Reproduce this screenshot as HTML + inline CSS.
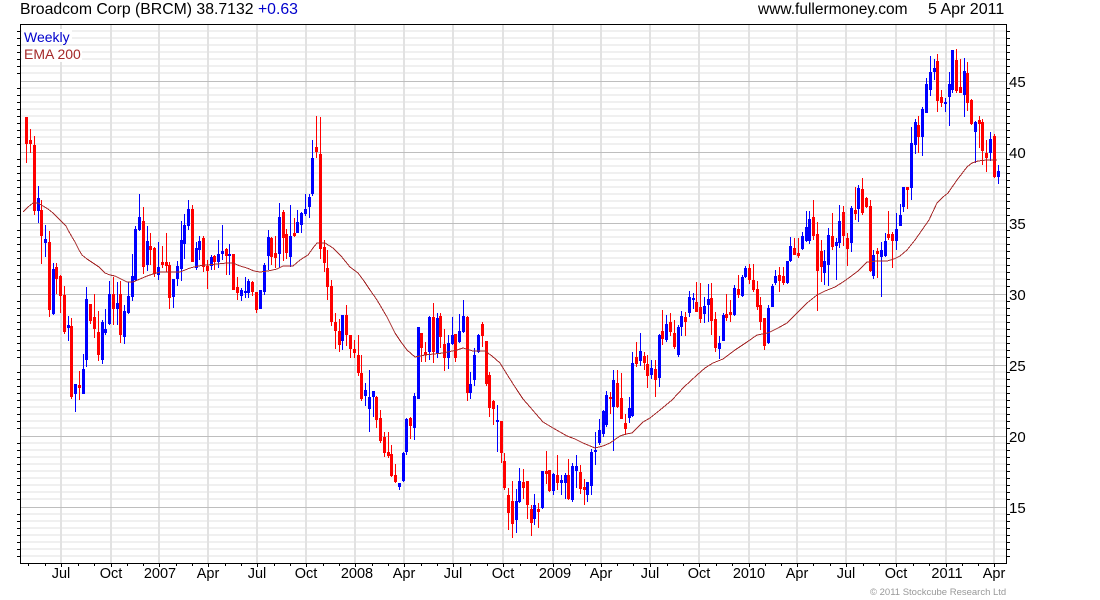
<!DOCTYPE html>
<html><head><meta charset="utf-8"><title>Broadcom Corp</title>
<style>
html,body{margin:0;padding:0;background:#fff;width:1100px;height:600px;overflow:hidden}
svg{display:block}
text{font-family:"Liberation Sans",Arial,sans-serif;fill:#000}
.t{font-size:15.8px}.w{font-size:15.5px}.d{font-size:16px}.y{font-size:15px}.x{font-size:14.5px;text-anchor:middle}.l{font-size:14px}
</style></head><body>
<svg width="1100" height="600" viewBox="0 0 1100 600" xmlns="http://www.w3.org/2000/svg">
<defs>
<path id="m" d="M0 31.5h1M0 38.5h1M0 45.5h1M0 52.5h1M0 59.5h1M0 66.5h1M0 73.5h1M0 88.5h1M0 95.5h1M0 102.5h1M0 109.5h1M0 116.5h1M0 123.5h1M0 130.5h1M0 137.5h1M0 144.5h1M0 159.5h1M0 166.5h1M0 173.5h1M0 180.5h1M0 187.5h1M0 194.5h1M0 201.5h1M0 208.5h1M0 215.5h1M0 230.5h1M0 237.5h1M0 244.5h1M0 251.5h1M0 258.5h1M0 265.5h1M0 272.5h1M0 279.5h1M0 286.5h1M0 301.5h1M0 308.5h1M0 315.5h1M0 322.5h1M0 329.5h1M0 336.5h1M0 343.5h1M0 350.5h1M0 357.5h1M0 372.5h1M0 379.5h1M0 386.5h1M0 393.5h1M0 400.5h1M0 407.5h1M0 414.5h1M0 421.5h1M0 428.5h1M0 443.5h1M0 450.5h1M0 457.5h1M0 464.5h1M0 471.5h1M0 478.5h1M0 485.5h1M0 492.5h1M0 499.5h1M0 514.5h1M0 521.5h1M0 528.5h1M0 535.5h1M0 542.5h1M0 549.5h1M0 556.5h1"/>
</defs>
<g shape-rendering="crispEdges" fill="none">
<use href="#m" transform="matrix(985 0 0 1 21 -.5)" stroke="#f0f0f0" stroke-width="2"/>
<path stroke="#e2e2e2" stroke-width="2" transform="translate(-.5 0)" d="M61.5 25V563M111.5 25V563M159.5 25V563M208.5 25V563M257.5 25V563M306.5 25V563M355.5 25V563M404.5 25V563M453.5 25V563M503.5 25V563M553.5 25V563M601.5 25V563M650.5 25V563M699.5 25V563M749.5 25V563M797.5 25V563M846.5 25V563M896.5 25V563M946.5 25V563M994.5 25V563"/>
<path stroke="#bebebe" d="M21 81.5H1006M21 152.5H1006M21 223.5H1006M21 294.5H1006M21 365.5H1006M21 436.5H1006M21 507.5H1006"/>
<use href="#m" transform="matrix(3 0 0 1 17 0)" stroke="#000"/>
<use href="#m" transform="matrix(3 0 0 1 1007 0)" stroke="#000"/>
<path stroke="#000" d="M20.5 24.5H1006.5V563.5H20.5Z"/>
<path stroke="#000" d="M61.5 564v3M111.5 564v3M159.5 564v3M208.5 564v3M257.5 564v3M306.5 564v3M355.5 564v3M404.5 564v3M453.5 564v3M503.5 564v3M553.5 564v3M601.5 564v3M650.5 564v3M699.5 564v3M749.5 564v3M797.5 564v3M846.5 564v3M896.5 564v3M946.5 564v3M994.5 564v3M28.5 564v2M45.5 564v2M78.5 564v2M94.5 564v2M127.5 564v2M143.5 564v2M176.5 564v2M192.5 564v2M225.5 564v2M241.5 564v2M274.5 564v2M290.5 564v2M323.5 564v2M339.5 564v2M372.5 564v2M388.5 564v2M421.5 564v2M437.5 564v2M470.5 564v2M487.5 564v2M520.5 564v2M536.5 564v2M570.5 564v2M585.5 564v2M617.5 564v2M633.5 564v2M667.5 564v2M683.5 564v2M716.5 564v2M732.5 564v2M765.5 564v2M781.5 564v2M813.5 564v2M830.5 564v2M863.5 564v2M879.5 564v2M913.5 564v2M929.5 564v2M962.5 564v2M978.5 564v2"/>
<rect x="22" y="29" width="50" height="15" fill="#fff"/>
<rect x="22" y="46" width="60" height="16" fill="#fff"/>
<path stroke="#ff0000" d="M26.5 117V163M30.5 129V153M34.5 136V215M41.5 200V264M49.5 231V317M56.5 263V294M60.5 275V313M64.5 286V334M71.5 318V399M79.5 371V400M90.5 304V324M94.5 294V338M98.5 311V361M113.5 277V325M120.5 281V343M143.5 207V274M150.5 233V265M154.5 247V277M162.5 246V268M166.5 233V272M169.5 262V309M192.5 205V262M203.5 236V272M207.5 260V289M214.5 255V270M226.5 248V275M233.5 254V290M237.5 277V300M252.5 281V296M256.5 292V313M271.5 237V265M275.5 236V268M283.5 210V261M286.5 229V259M294.5 218V237M316.5 116V158M320.5 117V259M324.5 240V272M327.5 250V300M331.5 280V326M335.5 313V349M339.5 319V352M346.5 305V346M350.5 335V358M354.5 340V358M358.5 335V376M361.5 355V401M376.5 396V428M380.5 410V443M384.5 432V457M388.5 432V458M391.5 445V477M395.5 464V483M410.5 417V439M421.5 333V362M425.5 342V362M433.5 303V363M440.5 313V348M444.5 329V371M455.5 334V362M467.5 316V401M482.5 322V347M486.5 341V386M489.5 372V417M493.5 400V425M501.5 421V463M504.5 453V490M508.5 488V530M512.5 481V538M523.5 469V499M527.5 481V519M531.5 505V536M538.5 503V528M546.5 451V484M549.5 470V492M557.5 455V490M568.5 459V500M580.5 465V494M584.5 479V505M610.5 392V414M617.5 370V408M621.5 373V419M625.5 414V435M636.5 342V367M644.5 352V370M647.5 355V388M655.5 360V397M662.5 310V345M670.5 313V336M674.5 320V349M685.5 312V336M696.5 282V312M700.5 283V323M711.5 283V335M715.5 312V352M726.5 294V321M730.5 300V322M738.5 275V298M749.5 264V284M753.5 264V292M757.5 281V310M760.5 297V330M764.5 318V350M779.5 267V292M783.5 267V285M794.5 238V255M798.5 238V258M813.5 200V240M817.5 222V311M821.5 240V282M832.5 213V250M843.5 206V246M847.5 233V266M855.5 187V220M862.5 178V215M866.5 197V208M870.5 200V272M877.5 248V278M888.5 211V240M892.5 232V268M907.5 187V209M918.5 116V153M937.5 54V112M941.5 90V107M956.5 49V93M960.5 59V93M967.5 62V111M971.5 99V125M979.5 116V148M982.5 119V165M986.5 140V172M994.5 134V178"/>
<path stroke="#ff0000" stroke-width="3" d="M26.5 117V144M30.5 140V144M34.5 145V211M41.5 210V236M49.5 242V310M56.5 267V279M60.5 276V296M64.5 295V332M71.5 326V397M79.5 385V388M90.5 304V321M94.5 317V329M98.5 332V355M113.5 294V309M120.5 294V335M143.5 221V267M150.5 246V250M154.5 248V274M162.5 262V265M166.5 262V266M169.5 265V298M192.5 209V262M203.5 238V267M207.5 266V271M214.5 256V262M226.5 249V256M233.5 254V290M237.5 287V293M252.5 282V292M256.5 292V310M271.5 238V257M275.5 253V258M283.5 212V238M286.5 234V253M294.5 233V236M316.5 147V152M320.5 154V249M324.5 247V263M327.5 268V287M331.5 286V322M335.5 322V331M339.5 331V345M346.5 315V335M350.5 335V349M354.5 349V353M358.5 355V373M361.5 373V399M376.5 397V420M380.5 418V441M384.5 437V453M388.5 452V456M391.5 454V476M395.5 475V482M410.5 418V426M421.5 333V348M425.5 352V355M433.5 317V352M440.5 316V337M444.5 344V358M455.5 334V358M467.5 317V393M482.5 324V336M486.5 341V384M489.5 375V408M493.5 401V409M501.5 421V453M504.5 461V488M508.5 495V513M512.5 501V524M523.5 482V488M527.5 481V505M531.5 509V523M538.5 509V512M546.5 471V474M549.5 470V491M557.5 475V483M568.5 475V499M580.5 472V489M584.5 487V490M610.5 397V399M617.5 383V407M621.5 398V419M625.5 423V429M636.5 357V364M644.5 356V363M647.5 364V376M655.5 369V380M662.5 331V339M670.5 322V332M674.5 333V347M685.5 317V322M696.5 302V312M700.5 307V319M711.5 298V321M715.5 319V348M726.5 314V318M730.5 312V315M738.5 289V295M749.5 268V280M753.5 280V290M757.5 289V307M760.5 305V322M764.5 318V346M779.5 275V281M783.5 276V283M794.5 248V255M798.5 253V256M813.5 217V236M817.5 234V271M821.5 251V267M832.5 236V247M843.5 212V236M847.5 238V249M855.5 210V214M862.5 189V213M866.5 198V207M870.5 206V271M877.5 251V254M888.5 234V238M892.5 234V241M907.5 187V190M918.5 125V137M937.5 61V101M941.5 97V103M956.5 60V91M960.5 87V93M967.5 73V103M971.5 100V124M979.5 120V124M982.5 122V151M986.5 153V158M994.5 136V177"/>
<path stroke="#0000ff" d="M38.5 186V223M45.5 225V257M53.5 263V315M68.5 316V341M75.5 384V412M83.5 354V394M86.5 287V367M102.5 320V364M105.5 309V335M109.5 281V325M117.5 282V325M124.5 305V344M128.5 282V314M132.5 254V301M135.5 226V281M139.5 194V231M147.5 226V271M158.5 242V280M173.5 279V308M177.5 261V286M181.5 221V281M184.5 214V259M188.5 200V230M196.5 242V270M199.5 236V260M211.5 255V270M218.5 240V268M222.5 225V260M229.5 244V275M241.5 288V301M245.5 277V298M248.5 279V298M260.5 290V309M264.5 263V295M268.5 230V270M279.5 203V268M290.5 205V267M297.5 210V233M301.5 212V233M305.5 194V216M309.5 194V218M312.5 140V196M342.5 315V350M365.5 383V406M369.5 370V432M373.5 391V417M399.5 483V490M403.5 452V482M406.5 418V455M414.5 393V440M418.5 327V399M429.5 316V360M437.5 313V358M448.5 335V369M452.5 317V345M459.5 314V343M463.5 300V333M470.5 372V399M474.5 348V386M478.5 334V353M497.5 405V452M516.5 489V533M519.5 468V503M534.5 494V525M542.5 471V509M553.5 473V495M561.5 475V495M565.5 473V499M572.5 463V502M576.5 455V488M587.5 482V502M591.5 449V495M595.5 432V465M599.5 419V445M603.5 410V437M606.5 391V427M613.5 370V451M629.5 397V423M632.5 352V417M640.5 333V366M651.5 360V379M659.5 334V387M666.5 315V342M678.5 325V357M681.5 311V336M689.5 291V317M693.5 293V309M704.5 297V323M708.5 284V322M719.5 336V359M723.5 313V341M734.5 285V316M742.5 275V297M745.5 266V278M768.5 305V344M772.5 284V307M775.5 270V285M787.5 261V284M790.5 237V262M802.5 232V250M806.5 211V242M809.5 211V244M824.5 250V285M828.5 228V286M836.5 238V280M839.5 205V248M851.5 206V252M858.5 185V222M873.5 250V279M881.5 242V297M885.5 233V257M896.5 213V250M900.5 204V226M903.5 187V212M911.5 127V200M915.5 119V154M922.5 107V156M926.5 78V113M930.5 56V96M934.5 59V80M945.5 98V112M949.5 72V126M952.5 50V93M964.5 58V117M975.5 121V163M990.5 132V161M998.5 165V184"/>
<path stroke="#0000ff" stroke-width="3" d="M38.5 198V211M45.5 239V243M53.5 269V314M68.5 325V328M75.5 384V394M83.5 369V394M86.5 299V360M102.5 322V360M105.5 329V333M109.5 294V324M117.5 303V309M124.5 311V337M128.5 296V313M132.5 276V297M135.5 229V280M139.5 217V230M147.5 241V265M158.5 267V275M173.5 279V297M177.5 266V279M181.5 240V269M184.5 225V244M188.5 209V226M196.5 248V268M199.5 241V250M211.5 257V266M218.5 254V262M222.5 251V254M229.5 254V256M241.5 290V296M245.5 291V293M248.5 281V293M260.5 290V309M264.5 265V292M268.5 237V256M279.5 217V254M290.5 236V257M297.5 222V233M301.5 213V225M305.5 209V214M309.5 197V207M312.5 158V194M342.5 315V341M365.5 390V396M369.5 397V409M373.5 391V397M399.5 483V487M403.5 453V481M406.5 419V452M414.5 396V428M418.5 327V399M429.5 317V352M437.5 318V354M448.5 343V358M452.5 335V344M459.5 331V342M463.5 316V332M470.5 384V393M474.5 355V380M478.5 335V352M497.5 420V422M516.5 501V520M519.5 481V502M534.5 505V519M542.5 471V508M553.5 474V491M561.5 480V483M565.5 475V483M572.5 466V500M576.5 466V471M587.5 482V495M591.5 452V486M595.5 450V452M599.5 430V443M603.5 411V434M606.5 395V425M613.5 380V407M629.5 408V418M632.5 363V416M640.5 351V361M651.5 368V375M659.5 335V378M666.5 324V340M678.5 327V355M681.5 316V327M689.5 297V313M693.5 298V300M704.5 306V314M708.5 299V305M719.5 343V349M723.5 315V341M734.5 288V315M742.5 277V296M745.5 268V277M768.5 308V343M772.5 286V307M775.5 276V283M787.5 261V283M790.5 246V261M802.5 236V249M806.5 227V241M809.5 219V241M824.5 261V273M828.5 235V265M836.5 242V246M839.5 221V243M851.5 208V243M858.5 188V209M873.5 255V276M881.5 250V257M885.5 241V256M896.5 229V241M900.5 215V226M903.5 187V207M911.5 143V188M915.5 122V145M922.5 109V137M926.5 84V113M930.5 72V90M934.5 68V72M945.5 102V104M949.5 84V97M952.5 50V90M964.5 71V95M975.5 122V132M990.5 139V153M998.5 171V177"/>
<polyline stroke="#a52a2a" points="23,212 28,207 33,203 38,203 43,206 48,209 53,213 58,218 63,223 66,226 68,230 72,237 75,242 79,250 82,255 87,259 93,263 99,267 105,273 110,275 115,276 121,279 127,282 133,282 140,279 147,276 153,274 160,272 170,272 180,272 185,270 190,268 198,266 207,265 217,264 227,263 233,263 240,266 247,268 254,271 260,272 268,271 277,269 283,266 293,266 300,260 308,255 313,248 317,243 325,243 333,248 341,256 350,267 358,273 364,281 370,290 377,300 387,317 395,333 401,342 407,350 415,357 425,355 434,354 443,353 457,350 463,348 473,351 485,351 492,356 500,363 508,376 517,390 523,399 530,407 536,414 543,422 553,428 567,436 575,439 583,443 595,448 603,446 610,443 620,436 626,434 632,433 637,428 643,422 650,418 660,410 672,400 684,387 697,375 705,368 713,363 723,359 735,350 747,342 757,335 768,333 778,328 787,323 797,313 807,303 817,295 825,291 835,287 843,282 850,277 858,271 867,262 877,261 887,261 894,259 900,256 907,250 915,240 922,230 929,220 937,203 943,197 948,193 957,180 967,167 972,163 978,161 987,160 997,160"/>
</g>
<text class="t" x="20" y="14">Broadcom Corp (BRCM) 38.7132 <tspan style="fill:#0000cc">+0.63</tspan></text>
<text class="w" x="758" y="14">www.fullermoney.com</text>
<text class="d" x="928" y="14">5 Apr 2011</text>
<text class="l" x="24" y="42" style="fill:#0000cc">Weekly</text>
<text class="l" x="24" y="59" style="fill:#a52a2a">EMA 200</text>
<text class="y" x="1009" y="87">45</text>
<text class="y" x="1009" y="158">40</text>
<text class="y" x="1009" y="229">35</text>
<text class="y" x="1009" y="300">30</text>
<text class="y" x="1009" y="371">25</text>
<text class="y" x="1009" y="442">20</text>
<text class="y" x="1009" y="513">15</text>
<text class="x" x="61" y="578">Jul</text>
<text class="x" x="111" y="578">Oct</text>
<text class="x" x="160" y="578">2007</text>
<text class="x" x="208" y="578">Apr</text>
<text class="x" x="257" y="578">Jul</text>
<text class="x" x="306" y="578">Oct</text>
<text class="x" x="357" y="578">2008</text>
<text class="x" x="404" y="578">Apr</text>
<text class="x" x="453" y="578">Jul</text>
<text class="x" x="503" y="578">Oct</text>
<text class="x" x="555" y="578">2009</text>
<text class="x" x="601" y="578">Apr</text>
<text class="x" x="650" y="578">Jul</text>
<text class="x" x="699" y="578">Oct</text>
<text class="x" x="749" y="578">2010</text>
<text class="x" x="797" y="578">Apr</text>
<text class="x" x="846" y="578">Jul</text>
<text class="x" x="896" y="578">Oct</text>
<text class="x" x="947" y="578">2011</text>
<text class="x" x="994" y="578">Apr</text>
<text x="870" y="595" style="font-size:9.5px;fill:#999">© 2011 Stockcube Research Ltd</text>
</svg>
</body></html>
